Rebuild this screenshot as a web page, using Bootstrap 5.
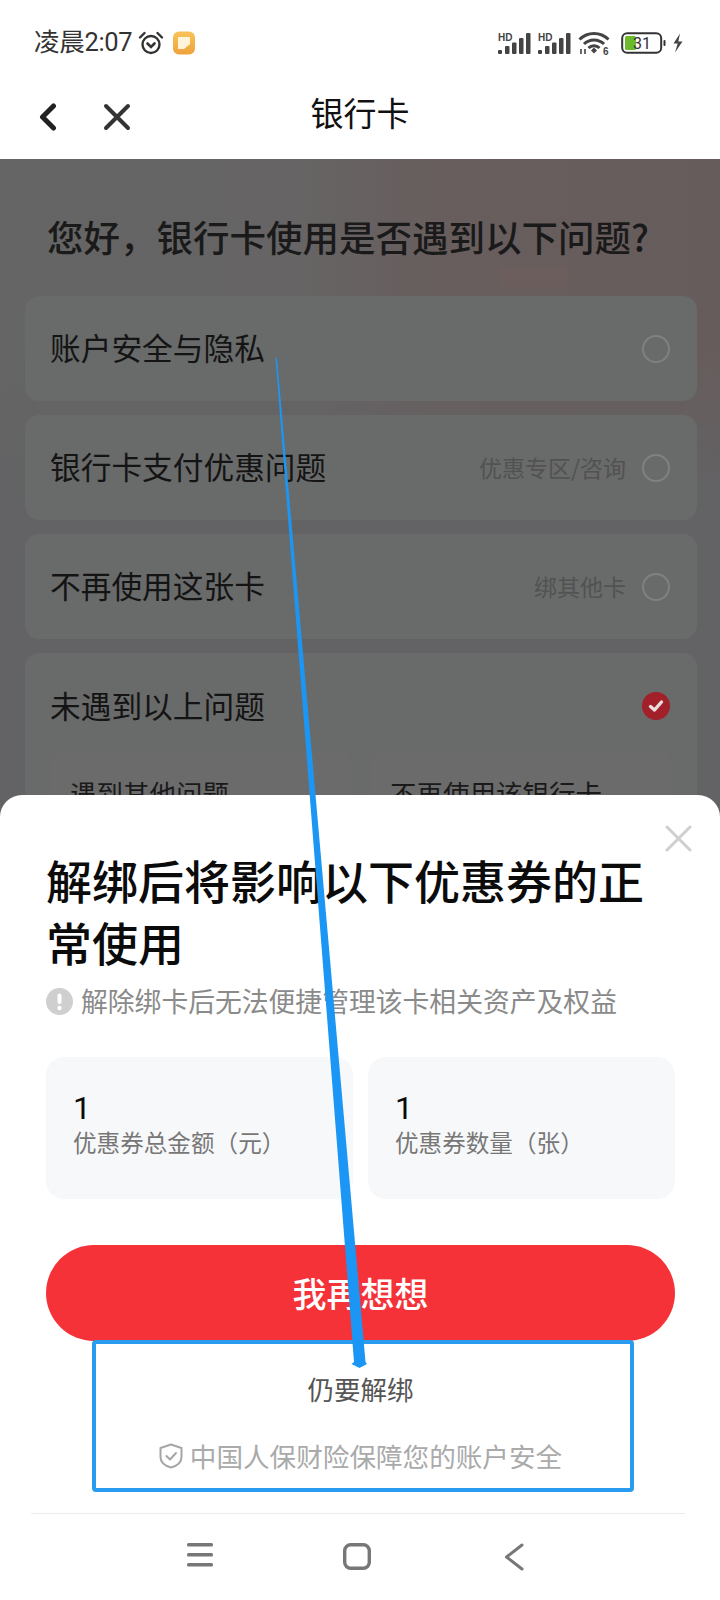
<!DOCTYPE html>
<html lang="zh-CN">
<head>
<meta charset="utf-8">
<title>银行卡</title>
<link href="https://cdn.jsdelivr.net/npm/bootstrap@5.3.0/dist/css/bootstrap.min.css" rel="stylesheet">
<style>
html,body{margin:0;background:#fff}
body{font-family:"Noto Sans CJK SC","Liberation Sans",sans-serif}
.phone{width:720px;height:1600px;position:relative;overflow:hidden;background:#fff}
.statusbar{height:80px;padding:6px 35px 0 34px}
.clock{font-family:"Roboto","Noto Sans CJK SC",sans-serif;font-size:25.5px;line-height:1;color:#333;margin-right:6px;letter-spacing:-.3px}
.sysicons{gap:6px}
.topnav{height:79px;position:relative;padding:0 0 6px 38px;gap:45px}
.topnav-title{position:absolute;left:0;right:0;top:10px;text-align:center;font-size:33px;line-height:44px;color:#111}
.dimmed{height:665px;isolation:isolate;background:
 linear-gradient(#6b5e5c,#6b5e5c) 500px 108px/68px 20px no-repeat,
 linear-gradient(90deg,#656565 0,#666464 42%,#685e5e 60%,#675c5c 100%);padding:0 23px 0 25px;overflow:hidden;position:relative}
.dimmed::after{content:"";position:absolute;left:0;right:0;top:190px;bottom:0;background:linear-gradient(rgba(100,100,101,0),#636365 150px);z-index:0}
.dimmed>*{position:relative;z-index:1}
.ask{font-size:36.5px;font-weight:500;line-height:48px;color:#1a1a1a;margin:54px 0 35px 22px;white-space:nowrap}
.opt{background:#696a6a;border-radius:14px;height:105px;margin-bottom:14px;padding:0 27px 0 25px;color:#141414;font-size:30.7px}
.opt-text{padding-bottom:2px}
.opt-last{height:auto;padding-top:29px;padding-bottom:24px;margin-bottom:0}
.opt-hint{font-size:23px;color:#525252;margin-right:16px;line-height:1}
.radio-dot{width:28px;height:28px;border-radius:50%;border:2px solid #808080;flex:none}
.radio-on{border:0;background:#a12029}
.subrow{gap:19px;margin:22px -1px 0 0}
.subcell{flex:1;background:#6b6b6b;border-radius:12px;height:120px;padding:23px 20px;font-size:26.5px;line-height:36px;color:#1a1a1a;white-space:nowrap}
.sheet{position:absolute;left:0;right:0;top:795px;bottom:0;background:#fff;border-radius:22px 22px 0 0;padding-top:53px}
.sheet-close{position:absolute;right:28px;top:30px;width:27px;height:27px}
.sheet-body{padding:0 45px 0 46px}
.sheet-title{font-size:46px;font-weight:500;line-height:62px;color:#0b0b0b;margin:0}
.warnrow{height:36px;margin-top:11px;font-size:26.8px;color:#8a8a8a;gap:8px;white-space:nowrap}
.stats{gap:15px;margin-top:38px}
.statbox{flex:1;height:142px;background:#f7f8fa;border-radius:18px;padding:32px 27px 0}
.statnum{font-family:"Roboto",sans-serif;font-size:32px;line-height:38px;color:#0b0b0b}
.statlabel{font-size:23.6px;line-height:34px;color:#777;margin-top:-2px;white-space:nowrap}
.cta{display:block;width:100%;height:96px;margin-top:46px;background:#f53238;border:0;color:#fff;font-size:34px;font-weight:500;line-height:1}
.cta:hover,.cta:active{background:#f53238!important;color:#fff!important}
.unbind{font-size:26.5px;line-height:36px;color:#555;margin-top:30px;text-align:center}
.assure{font-size:26.6px;line-height:36px;color:#aaa;margin-top:31px;gap:7px;white-space:nowrap}
.rule{height:1px;background:#ececec;margin:39px 35px 0 31px}
.softkeys{padding:29px 6px 0 0}
.softkey{width:157px}
.overlay{position:absolute;left:0;top:0;pointer-events:none}
</style>
</head>
<body>
<div class="phone">

  <div class="statusbar d-flex align-items-center justify-content-between">
    <div class="d-flex align-items-center">
      <span class="clock">凌晨2:07</span>
      <svg width="26" height="24" viewBox="0 0 26 24" fill="none" stroke="#333" stroke-width="2.4" stroke-linecap="round">
        <circle cx="13" cy="13.5" r="8.5"/>
        <path d="M2 6.5 6.5 2M24 6.5 19.500 2"/>
        <path d="M9.500 12.500l3.500 3.500 3.500-3.500" stroke-width="2.600"/>
      </svg>
      <svg class="ms-2" width="24" height="24" viewBox="0 0 24 24">
        <defs><linearGradient id="og" x1="0" y1="0" x2="0" y2="1"><stop offset="0" stop-color="#f9c35a"/><stop offset="1" stop-color="#efa33c"/></linearGradient></defs>
        <rect x="1" y="0.500" width="22" height="23" rx="6" fill="url(#og)"/>
        <path d="M6 6h12v7l-6 5H6z" fill="#fff3d9"/>
      </svg>
    </div>
    <div class="sysicons d-flex align-items-center">
      <svg width="34" height="23" viewBox="0 0 34 23" fill="#444">
        <text x="0" y="9" font-family="Liberation Sans" font-weight="700" font-size="10">HD</text>
        <rect x="0" y="18" width="4" height="4" rx="1"/><rect x="7" y="14" width="4.500" height="8" rx="1"/><rect x="14" y="10.500" width="4.500" height="11.500" rx="1"/><rect x="21" y="6" width="4.500" height="16" rx="1"/><rect x="28" y="1" width="4.500" height="21" rx="1"/>
      </svg>
      <svg width="34" height="23" viewBox="0 0 34 23" fill="#444">
        <text x="0" y="9" font-family="Liberation Sans" font-weight="700" font-size="10">HD</text>
        <rect x="0" y="18" width="4" height="4" rx="1"/><rect x="7" y="14" width="4.500" height="8" rx="1"/><rect x="14" y="10.500" width="4.500" height="11.500" rx="1"/><rect x="21" y="6" width="4.500" height="16" rx="1"/><rect x="28" y="1" width="4.500" height="21" rx="1"/>
      </svg>
      <svg width="33" height="24" viewBox="0 0 33 24" fill="none" stroke="#444" stroke-width="3">
        <path d="M1.500 8.500C9.500 .5 22.500 .5 30.500 8.500"/>
        <path d="M6 13c5.500-5.500 14.500-5.500 20 0"/>
        <path d="M10.500 17c3-3 8-3 11 0" />
        <path d="M16 16.500l3 3-3 3-3-3z" fill="#444" stroke="none"/>
        <path d="M3 18v5M7 23v-5" stroke-width="1.600"/>
        <text x="25" y="23.500" font-family="Liberation Sans" font-weight="700" font-size="10" fill="#444" stroke="none">6</text>
      </svg>
      <svg class="ms-1" width="64" height="22" viewBox="0 0 64 22" fill="none">
        <rect x="1.200" y="1.200" width="39" height="19.600" rx="5" stroke="#333" stroke-width="2"/>
        <rect x="4" y="4" width="11" height="14" rx="1.500" fill="#6cba2e"/>
        <text x="12" y="17" font-family="Roboto,Liberation Sans" font-size="16" fill="#333">31</text>
        <rect x="42.500" y="8" width="2" height="6" rx="1" fill="#333"/>
        <path d="M59 1.500 52.500 11.500h4.200L54 20.500l7.500-11h-4.200z" fill="#444"/>
      </svg>
    </div>
  </div>

  <div class="topnav d-flex align-items-center">
    <svg width="20" height="28" viewBox="0 0 20 28" fill="none" stroke="#222" stroke-width="5" stroke-linecap="round" stroke-linejoin="round"><path d="M15.500 3 4.500 14l11 11"/></svg>
    <svg width="28" height="28" viewBox="0 0 28 28" fill="none" stroke="#333" stroke-width="4" stroke-linecap="round"><path d="M3 3 25 25M25 3 3 25"/></svg>
    <div class="topnav-title">银行卡</div>
  </div>

  <div class="dimmed">
    <div class="ask">您好，银行卡使用是否遇到以下问题?</div>
    <div class="opt d-flex align-items-center">
      <span class="opt-text flex-grow-1">账户安全与隐私</span>
      <span class="radio-dot"></span>
    </div>
    <div class="opt d-flex align-items-center">
      <span class="opt-text flex-grow-1">银行卡支付优惠问题</span>
      <span class="opt-hint">优惠专区/咨询</span>
      <span class="radio-dot"></span>
    </div>
    <div class="opt d-flex align-items-center">
      <span class="opt-text flex-grow-1">不再使用这张卡</span>
      <span class="opt-hint">绑其他卡</span>
      <span class="radio-dot"></span>
    </div>
    <div class="opt opt-last">
      <div class="d-flex align-items-center">
        <span class="opt-text flex-grow-1">未遇到以上问题</span>
        <svg class="radio-dot radio-on" viewBox="0 0 28 28" fill="none" stroke="#e9dcdc" stroke-width="3.400" stroke-linecap="round" stroke-linejoin="round"><path d="M8.500 14.500l4 3.500 7-8"/></svg>
      </div>
      <div class="subrow d-flex">
        <div class="subcell">遇到其他问题</div>
        <div class="subcell">不再使用该银行卡</div>
      </div>
    </div>
  </div>

  <div class="sheet">
    <svg class="sheet-close" viewBox="0 0 27 27" fill="none" stroke="#cfcfcf" stroke-width="3" stroke-linecap="round"><path d="M2 2 25 25M25 2 2 25"/></svg>
    <div class="sheet-body">
      <h1 class="sheet-title">解绑后将影响以下优惠券的正常使用</h1>
      <div class="warnrow d-flex align-items-center">
        <svg width="27" height="27" viewBox="0 0 27 27"><circle cx="13.500" cy="13.500" r="13.500" fill="#cfcfcf"/><rect x="11.500" y="5.500" width="4" height="10.500" rx="2" fill="#fff"/><circle cx="13.500" cy="20" r="2.200" fill="#fff"/></svg>
        <span>解除绑卡后无法便捷管理该卡相关资产及权益</span>
      </div>
      <div class="stats d-flex">
        <div class="statbox">
          <div class="statnum">1</div>
          <div class="statlabel">优惠券总金额（元）</div>
        </div>
        <div class="statbox">
          <div class="statnum">1</div>
          <div class="statlabel">优惠券数量（张）</div>
        </div>
      </div>
      <button type="button" class="btn rounded-pill cta">我再想想</button>
      <div class="unbind">仍要解绑</div>
      <div class="assure d-flex align-items-center justify-content-center">
        <svg width="24" height="26" viewBox="0 0 24 26" fill="none" stroke="#a6a6a6" stroke-width="2" stroke-linejoin="round" stroke-linecap="round"><path d="M12 1.500 22.500 5v9c0 5.500-5 9-10.500 10.500C6.500 23 1.500 19.500 1.500 14V5z"/><path d="M7.500 13l3.500 3.500 6-6.500"/></svg>
        <span>中国人保财险保障您的账户安全</span>
      </div>
    </div>
    <div class="rule"></div>
    <div class="softkeys d-flex justify-content-center">
      <div class="softkey d-flex justify-content-center">
        <svg width="26" height="24" viewBox="0 0 26 24" fill="#777"><rect y="0" width="26" height="3.600" rx="1.500"/><rect y="10" width="26" height="3.600" rx="1.500"/><rect y="20" width="26" height="3.600" rx="1.500"/></svg>
      </div>
      <div class="softkey d-flex justify-content-center">
        <svg width="28" height="27" viewBox="0 0 28 27" fill="none" stroke="#777" stroke-width="3.400"><rect x="1.700" y="1.700" width="24.600" height="23.600" rx="6"/></svg>
      </div>
      <div class="softkey d-flex justify-content-center">
        <svg width="20" height="28" viewBox="0 0 20 28" fill="none" stroke="#777" stroke-width="3" stroke-linecap="round" stroke-linejoin="round"><path d="M18 2 2.500 14 18 26"/></svg>
      </div>
    </div>
  </div>

  <svg class="overlay" width="720" height="1600" viewBox="0 0 720 1600">
    <rect x="94" y="1342" width="538" height="148" rx="2" fill="none" stroke="#2a9cf0" stroke-width="4"/>
    <path d="M275.500 358 277 358 365.500 1362 367 1364 359.500 1368 351.500 1364 354 1362z" fill="#1c96f4"/>
  </svg>
</div>
<script src="https://cdn.jsdelivr.net/npm/bootstrap@5.3.0/dist/js/bootstrap.bundle.min.js"></script>
</body>
</html>
